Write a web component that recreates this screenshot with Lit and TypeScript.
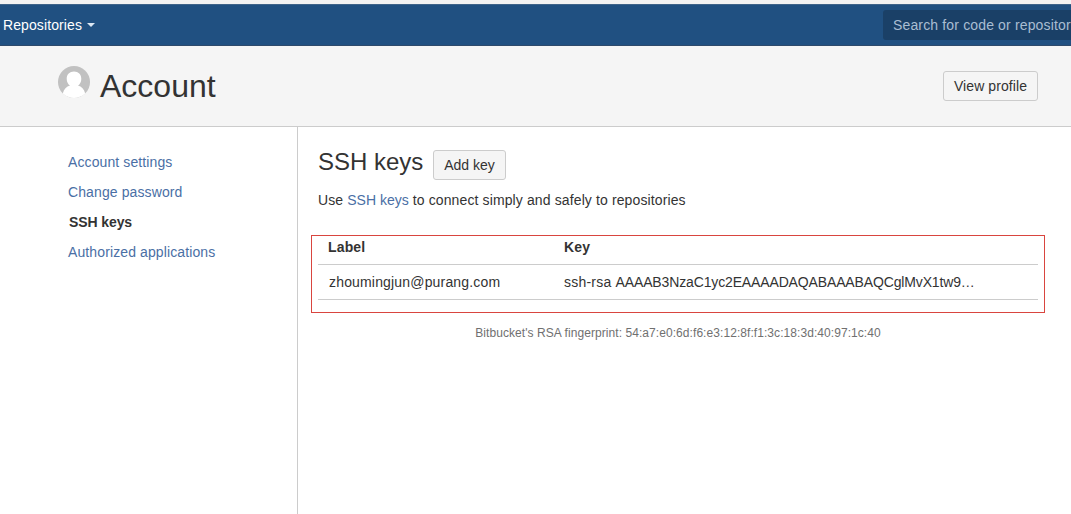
import { LitElement, html, css } from "lit";
import { customElement, property } from "lit/decorators.js";

@customElement("nav-bar")
class NavBar extends LitElement {
  static styles = css`
    :host {
      display: flex;
      box-sizing: border-box;
      height: 42px;
      justify-content: space-between;
      border-top: 1px solid #3f648a;
      border-bottom: 1px solid #2e4a6b;
      background: #205081;
      color: #fff;
      overflow: hidden;
    }
    .menu {
      display: flex;
      align-items: center;
      height: 40px;
      padding-left: 3px;
      letter-spacing: 0.1px;
    }
    .caret {
      margin-left: 5px;
      border: 4px solid transparent;
      border-top-color: #dbe7f3;
      border-bottom: 0;
    }
    .search {
      box-sizing: border-box;
      flex: none;
      width: 188px;
      height: 30px;
      margin-top: 5px;
      padding-left: 10px;
      border-radius: 3px 0 0 3px;
      background: #1a4067;
      color: #a9bdd2;
      line-height: 30px;
      letter-spacing: 0.15px;
      white-space: nowrap;
    }
  `;

  render() {
    return html`
      <div class="menu">Repositories<span class="caret"></span></div>
      <div class="search">Search for code or repositor</div>
    `;
  }
}

@customElement("side-nav")
class SideNav extends LitElement {
  static styles = css`
    :host {
      display: flex;
      flex-direction: column;
      box-sizing: border-box;
      width: 298px;
      padding: 20px 0 0 68px;
      border-right: 1px solid #ccc;
    }
    .item {
      color: #4a6fa5;
      line-height: 30px;
      letter-spacing: 0.11px;
      text-decoration: none;
    }
    .active {
      padding-left: 1px;
      color: #333;
      font-weight: bold;
      letter-spacing: -0.1px;
    }
  `;

  @property() active = "";

  items = ["Account settings", "Change password", "SSH keys", "Authorized applications"];

  render() {
    return this.items.map(
      (item) => html`<a class="item ${item === this.active ? "active" : ""}">${item}</a>`
    );
  }
}

@customElement("app-root")
class AppRoot extends LitElement {
  static styles = css`
    :host {
      display: flex;
      flex-direction: column;
      box-sizing: border-box;
      height: 514px;
      padding-top: 4px;
      background: linear-gradient(#f3f3f3 4px, #fff 4px);
      color: #333;
      font-family: "Liberation Sans", Arial, sans-serif;
      font-size: 14px;
      overflow: hidden;
    }
    .header {
      display: flex;
      box-sizing: border-box;
      flex: none;
      height: 81px;
      padding: 0 33px 0 58px;
      border-bottom: 1px solid #ccc;
      background: #f5f5f5;
    }
    .avatar {
      width: 32px;
      height: 32px;
      margin-top: 20px;
    }
    h1 {
      flex: 1;
      margin: 0 0 0 10px;
      font-size: 32px;
      font-weight: normal;
      line-height: 80px;
    }
    .button {
      box-sizing: border-box;
      height: 30px;
      padding: 0 10px;
      border: 1px solid #ccc;
      border-radius: 3px;
      background: #f5f5f5;
      color: #333;
      font: inherit;
      line-height: 28px;
    }
    .profile {
      width: 95px;
      margin-top: 25px;
      padding: 0 9px;
      letter-spacing: 0.08px;
    }
    .body {
      display: flex;
      flex: 1;
    }
    .content {
      flex: 1;
      padding: 23px 26px 0 13px;
    }
    .title {
      display: flex;
      padding-left: 7px;
    }
    h2 {
      width: 115px;
      margin: 0;
      font-size: 24px;
      font-weight: normal;
      line-height: 24px;
      white-space: nowrap;
    }
    .add {
      width: 73px;
    }
    .intro {
      margin: 12px 0 0 7px;
      line-height: 16px;
      letter-spacing: 0.12px;
    }
    .link {
      color: #4a6fa5;
      letter-spacing: 0;
    }
    .keys {
      box-sizing: border-box;
      height: 78px;
      margin-top: 27px;
      padding: 0 6px;
      border: 1px solid #d9453f;
    }
    .row {
      display: grid;
      grid-template-columns: 236px 1fr;
      box-sizing: border-box;
      height: 35px;
      padding-left: 10px;
      border-bottom: 1px solid #ccc;
      line-height: 34px;
    }
    .head {
      height: 29px;
      font-weight: bold;
      line-height: 22px;
      letter-spacing: 0.15px;
    }
    .label {
      padding-left: 1px;
      letter-spacing: 0.17px;
    }
    .key {
      letter-spacing: -0.14px;
    }
    .type {
      letter-spacing: 0.22px;
    }
    .fingerprint {
      margin: 13px 0 0;
      color: #707070;
      font-size: 12px;
      line-height: 14px;
      letter-spacing: 0.065px;
      text-align: center;
    }
  `;

  render() {
    return html`
      <nav-bar></nav-bar>
      <div class="header">
        <svg class="avatar" viewBox="0 0 32 32">
          <circle cx="16" cy="16" r="16" fill="#c1c1c1" />
          <path
            fill="#fff"
            d="M16 5.500c-4.300 0-7.300 3-7.300 7.200 0 3 1.300 5.600 3.300 6.900-3.500 1-6.200 3.600-7.200 8C8 30.600 12 32 16 32s8-1.400 11.200-4.400c-1-4.400-3.700-7-7.200-8 2-1.300 3.300-3.900 3.300-6.900 0-4.200-3-7.200-7.300-7.200z"
          />
        </svg>
        <h1>Account</h1>
        <button class="button profile">View profile</button>
      </div>
      <div class="body">
        <side-nav active="SSH keys"></side-nav>
        <div class="content">
          <div class="title">
            <h2>SSH keys</h2>
            <button class="button add">Add key</button>
          </div>
          <p class="intro">
            Use <a class="link">SSH keys</a> to connect simply and safely to repositories
          </p>
          <div class="keys">
            <div class="row head"><span>Label</span><span>Key</span></div>
            <div class="row">
              <span class="label">zhoumingjun@purang.com</span>
              <span class="key"
                ><span class="type">ssh-rsa </span>AAAAB3NzaC1yc2EAAAADAQABAAABAQCglMvX1tw9…</span
              >
            </div>
          </div>
          <p class="fingerprint">
            Bitbucket's RSA fingerprint: 54:a7:e0:6d:f6:e3:12:8f:f1:3c:18:3d:40:97:1c:40
          </p>
        </div>
      </div>
    `;
  }
}
